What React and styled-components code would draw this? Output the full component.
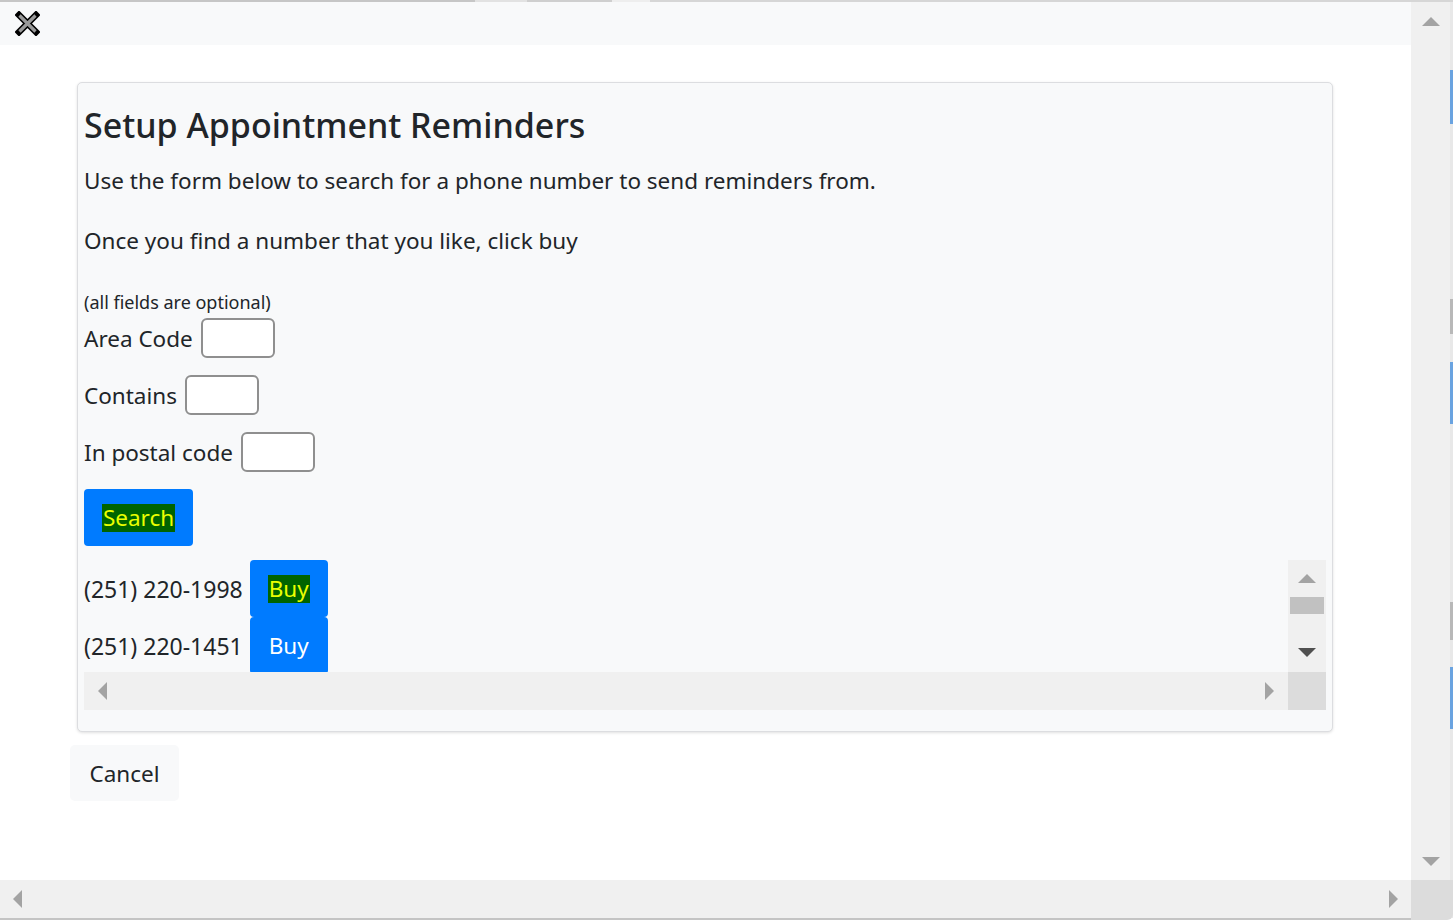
import styled, { createGlobalStyle } from "styled-components";

const GlobalStyle = createGlobalStyle`
    html, body {
        margin: 0;
        padding: 0;
        overflow: hidden;
        background: #ffffff;
    }
    * {
        box-sizing: border-box;
    }
`;

const FONT = `"Noto Sans", "Open Sans", "Liberation Sans", sans-serif`;

const Window = styled.div`
    width: 1453px;
    height: 920px;
    display: grid;
    grid-template-columns: 1411px 39px 3px;
    grid-template-rows: 2px 878px 38px 2px;
    background: #ffffff;
    font-family: ${FONT};
    color: #212529;
`;

const TopEdge = styled.div`
    grid-column: 1 / 4;
    background: linear-gradient(to right, #c6c6c6 0 475px, #e2e2e2 475px 527px, #cfcfcf 527px 612px, #eeeeee 612px 650px, #d6d6d6 650px);
`;

const Page = styled.div`
    grid-column: 1;
    grid-row: 2;
    display: flex;
    flex-direction: column;
    overflow: hidden;
`;

const Header = styled.div`
    height: 43px;
    flex: none;
    background: #f8f9fa;
    display: flex;
    align-items: center;
    padding-left: 15px;
`;

const CloseButton = styled.button`
    width: 25px;
    height: 25px;
    padding: 0;
    border: none;
    background: transparent;
    display: flex;
`;

const Body = styled.div`
    padding: 37px 0 0 70px;
    display: flex;
    flex-direction: column;
    align-items: flex-start;
`;

const Card = styled.div`
    width: 1256px;
    margin-left: 7px;
    background: #f8f9fa;
    border: 1px solid #dcdde0;
    border-radius: 5px;
    box-shadow: 0 1px 3px rgba(0, 0, 0, 0.12);
    padding: 22px 6px 21px 6px;
`;

const Title = styled.h3`
    margin: 0 0 19px;
    font-size: 34px;
    font-weight: 500;
    line-height: 40px;
`;

const Text = styled.p`
    margin: 0 0 ${(p) => p.$gap}px;
    font-size: 22.5px;
    line-height: 33px;
`;

const Small = styled.div`
    font-size: 18px;
    line-height: 20px;
    margin-bottom: 6px;
`;

const Field = styled.div`
    display: flex;
    align-items: center;
    gap: 8px;
    margin-bottom: 17px;
    font-size: 22.5px;
`;

const Input = styled.input`
    width: 74px;
    height: 40px;
    border: 2px solid #8f8f8f;
    border-radius: 6px;
    background: #ffffff;
    font-family: ${FONT};
    font-size: 20px;
    outline: none;
    padding: 0 6px;
`;

const BlueButton = styled.button`
    height: ${(p) => p.$h}px;
    width: ${(p) => p.$w}px;
    border: none;
    border-radius: 4px;
    background: #007bff;
    color: #ffffff;
    font-family: ${FONT};
    font-size: 22.5px;
    padding: 0;
    display: flex;
    align-items: center;
    justify-content: center;
    flex: none;
`;

const Mark = styled.span`
    background: #006400;
    color: #eaff00;
    line-height: 28px;
    padding: 0 1px;
`;

const ScrollBox = styled.div`
    margin-top: 14px;
    display: grid;
    grid-template-columns: 1fr 38px;
    grid-template-rows: 112px 38px;
    width: 1242px;
`;

const ScrollContent = styled.div`
    overflow: hidden;
`;

const NumberRow = styled.div`
    display: flex;
    align-items: center;
    gap: 7px;
    font-size: 23px;
    height: 57px;
`;

const VBar = styled.div`
    background: #f0f0f0;
    display: flex;
    flex-direction: column;
    align-items: center;
    padding: 14px 0 15px;
`;

const HBar = styled.div`
    background: #f0f0f0;
    display: flex;
    align-items: center;
    justify-content: space-between;
    padding: 0 ${(p) => p.$pad}px;
`;

const Corner = styled.div`
    background: #dcdcdc;
`;

const Thumb = styled.div`
    width: 34px;
    height: 17px;
    background: #c1c1c1;
    margin-top: 14px;
`;

const Spacer = styled.div`
    flex: 1;
`;

const Arrow = styled.div`
    width: 0;
    height: 0;
    border-style: solid;
    ${(p) =>
        p.$dir === "up"
            ? `border-width: 0 9px 9px 9px; border-color: transparent transparent ${p.$c} transparent;`
            : p.$dir === "down"
            ? `border-width: 9px 9px 0 9px; border-color: ${p.$c} transparent transparent transparent;`
            : p.$dir === "left"
            ? `border-width: 9px 9px 9px 0; border-color: transparent ${p.$c} transparent transparent;`
            : `border-width: 9px 0 9px 9px; border-color: transparent transparent transparent ${p.$c};`}
`;

const CancelButton = styled.button`
    margin-top: 13px;
    width: 109px;
    height: 56px;
    border: none;
    border-radius: 5px;
    background: #f8f9fa;
    color: #212529;
    font-family: ${FONT};
    font-size: 22.5px;
`;

const PageVBar = styled.div`
    grid-column: 2;
    grid-row: 2;
    background: #f0f0f0;
    display: flex;
    flex-direction: column;
    align-items: center;
    justify-content: space-between;
    padding: 15px 0 14px;
`;

const SideStrip = styled.div`
    grid-column: 3;
    grid-row: 2 / 4;
    background: linear-gradient(
        to bottom,
        #e8e8e8 0 68px,
        #6aa3e0 68px 122px,
        #e8e8e8 122px 297px,
        #b8b8b8 297px 332px,
        #e8e8e8 332px 360px,
        #6aa3e0 360px 422px,
        #e8e8e8 422px 600px,
        #b8b8b8 600px 638px,
        #e8e8e8 638px 665px,
        #6aa3e0 665px 727px,
        #e8e8e8 727px
    );
`;

const PageHBar = styled(HBar)`
    grid-column: 1;
    grid-row: 3;
`;

const PageCorner = styled.div`
    grid-column: 2 / 4;
    grid-row: 3 / 5;
    background: #dcdcdc;
    border-bottom-right-radius: 6px;
`;

const BottomEdge = styled.div`
    grid-column: 1 / 2;
    grid-row: 4;
    background: #c4c4c4;
`;

function CloseIcon() {
    return (
        <svg width="25" height="25" viewBox="0 0 25 25">
            <path d="M4 4 L21 21 M21 4 L4 21" stroke="#000" strokeWidth="6.5" strokeLinecap="square" />
            <path d="M4.5 4.5 L20.5 20.5 M20.5 4.5 L4.5 20.5" stroke="#9a9a9a" strokeWidth="3.2" strokeLinecap="butt" />
        </svg>
    );
}

const numbers = [
    { phone: "(251) 220-1998", marked: true },
    { phone: "(251) 220-1451", marked: false },
];

export default function App() {
    return (
        <>
            <GlobalStyle />
            <Window>
                <TopEdge />
                <Page>
                    <Header>
                        <CloseButton aria-label="Close">
                            <CloseIcon />
                        </CloseButton>
                    </Header>
                    <Body>
                        <Card>
                            <Title>Setup Appointment Reminders</Title>
                            <Text $gap={27}>Use the form below to search for a phone number to send reminders from.</Text>
                            <Text $gap={35}>Once you find a number that you like, click buy</Text>
                            <Small>(all fields are optional)</Small>
                            <Field>
                                Area Code <Input />
                            </Field>
                            <Field>
                                Contains <Input />
                            </Field>
                            <Field>
                                In postal code <Input />
                            </Field>
                            <BlueButton $w={109} $h={57}>
                                <Mark>Search</Mark>
                            </BlueButton>
                            <ScrollBox>
                                <ScrollContent>
                                    {numbers.map((n) => (
                                        <NumberRow key={n.phone}>
                                            {n.phone}
                                            <BlueButton $w={78} $h={57}>
                                                {n.marked ? <Mark>Buy</Mark> : "Buy"}
                                            </BlueButton>
                                        </NumberRow>
                                    ))}
                                </ScrollContent>
                                <VBar>
                                    <Arrow $dir="up" $c="#a3a3a3" />
                                    <Thumb />
                                    <Spacer />
                                    <Arrow $dir="down" $c="#505050" />
                                </VBar>
                                <HBar $pad={14}>
                                    <Arrow $dir="left" $c="#a3a3a3" />
                                    <Arrow $dir="right" $c="#a3a3a3" />
                                </HBar>
                                <Corner />
                            </ScrollBox>
                        </Card>
                        <CancelButton>Cancel</CancelButton>
                    </Body>
                </Page>
                <PageVBar>
                    <Arrow $dir="up" $c="#a3a3a3" />
                    <Arrow $dir="down" $c="#a3a3a3" />
                </PageVBar>
                <SideStrip />
                <PageHBar $pad={13}>
                    <Arrow $dir="left" $c="#a3a3a3" />
                    <Arrow $dir="right" $c="#a3a3a3" />
                </PageHBar>
                <PageCorner />
                <BottomEdge />
            </Window>
        </>
    );
}
